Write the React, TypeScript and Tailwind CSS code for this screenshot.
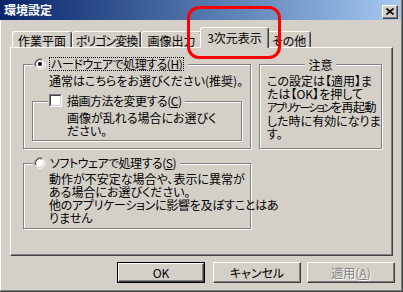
import React from 'react';

const FONT = "font-['Noto_Sans_CJK_JP','Liberation_Sans',sans-serif]";

const Radio: React.FC<{ checked?: boolean }> = ({ checked }) => (
  <svg width="12" height="12" viewBox="0 0 12 12" className="shrink-0">
    <path d="M1 8 A5.5 5.5 0 0 1 8 1" fill="none" stroke="#808080" strokeWidth="1" />
    <circle cx="6" cy="6" r="4.5" fill="#fff" />
    <path d="M2 8 A4.5 4.5 0 0 1 8 2" fill="none" stroke="#404040" strokeWidth="1" />
    <path d="M4 11 A5.5 5.5 0 0 0 11 4" fill="none" stroke="#fff" strokeWidth="1" />
    <path d="M4 10 A4.5 4.5 0 0 0 10 4" fill="none" stroke="#d4d0c8" strokeWidth="1" />
    {checked ? <circle cx="6" cy="6" r="2" fill="#000" /> : null}
  </svg>
);

const Checkbox: React.FC = () => (
  <div className="h-[13px] w-[13px] shrink-0 border-l border-t border-l-[#808080] border-t-[#808080] border-r border-b border-r-white border-b-white">
    <div className="h-full w-full border-l border-t border-l-[#404040] border-t-[#404040] border-r border-b border-r-[#d4d0c8] border-b-[#d4d0c8] bg-white" />
  </div>
);

const Group: React.FC<{ className?: string; legend: React.ReactNode; children?: React.ReactNode }> = ({
  className = '',
  legend,
  children,
}) => (
  <div
    className={`relative border border-[#808080] shadow-[inset_1px_1px_0_#ffffff,1px_1px_0_#ffffff] ${className}`}
  >
    {legend}
    {children}
  </div>
);

const Tab: React.FC<{ label: string; w: string; selected?: boolean; tight?: boolean }> = ({
  label,
  w,
  selected,
  tight,
}) => (
  <div
    className={`${w} flex items-center justify-center overflow-hidden whitespace-nowrap rounded-t-[3px] border-l border-t border-l-white border-t-white border-r border-r-[#404040] bg-[#d4d0c8] shadow-[inset_-1px_0_0_#808080] text-[12px] leading-[13px] ${
      tight ? 'tracking-[-1px]' : ''
    } ${selected ? 'relative z-10 -mx-[2px] h-[21px] self-start pb-[2px]' : 'mt-[4px] h-[16px] pt-[1px]'}`}
  >
    {label}
  </div>
);

const Button: React.FC<{ children: React.ReactNode; def?: boolean; disabled?: boolean; className?: string }> = ({
  children,
  def,
  disabled,
  className = '',
}) => (
  <div className={`h-[21px] w-[88px] ${def ? 'border border-black' : ''} ${className}`}>
    <div className="flex h-full w-full items-center justify-center border-l border-t border-l-white border-t-white border-r border-b border-r-[#404040] border-b-[#404040] shadow-[inset_-1px_-1px_0_#808080] text-[12px]">
      {disabled ? (
        <span className="text-[#808080] [text-shadow:1px_1px_0_#ffffff]">{children}</span>
      ) : (
        children
      )}
    </div>
  </div>
);

export default function App() {
  return (
    <div
      className={`${FONT} relative h-[292px] w-[403px] overflow-hidden bg-[#d4d0c8] text-black [font-feature-settings:'palt'] border-r border-b border-r-[#404040] border-b-[#404040]`}
    >
      <div className="flex h-full flex-col border-r border-b border-r-[#808080] border-b-[#808080] border-l border-l-white">
        {/* title bar */}
        <div className="-ml-[1px] flex h-[20px] items-center justify-between bg-linear-to-r from-[#0a246a] to-[#a6caf0] pl-[4px] pr-[3px]">
          <span className="text-[12px] font-bold leading-none text-white">環境設定</span>
          <div className="mt-[3px] flex h-[14px] w-[16px] items-center justify-center border-l border-t border-l-white border-t-white border-r border-b border-r-[#404040] border-b-[#404040] bg-[#d4d0c8] shadow-[inset_-1px_-1px_0_#808080]">
            <svg width="8" height="7" viewBox="0 0 8 7">
              <path d="M0.5 0.5 L7.5 6.5 M7.5 0.5 L0.5 6.5" stroke="#000" strokeWidth="1.6" />
            </svg>
          </div>
        </div>

        {/* tabs */}
        <div className="ml-[11px] mt-[7px] flex h-[20px] items-start">
          <Tab label="作業平面" w="w-[60px]" />
          <Tab label="ポリゴン変換" w="w-[69px]" tight />
          <Tab label="画像出力" w="w-[61px]" />
          <Tab label="3次元表示" w="w-[69px]" selected />
          <Tab label="その他" w="w-[44px]" />
        </div>

        {/* panel */}
        <div className="ml-[9px] flex h-[209px] w-[383px] border-l border-t border-l-white border-t-white border-r border-b border-r-[#404040] border-b-[#404040] shadow-[inset_-1px_-1px_0_#808080] pl-[12px] pt-[16px] text-[12px] leading-[13px]">
          <div className="flex w-[228px] flex-col">
            <Group
              className="h-[85px]"
              legend={
                <div className="absolute -top-[8px] left-[9px] flex items-center bg-[#d4d0c8] pr-[4px] pl-[1px]">
                  <Radio checked />
                  <span className="ml-[3px] whitespace-nowrap border border-dotted border-black px-[1px] leading-[12px] tracking-[-0.5px]">
                    ハードウェアで処理する(<span className="underline">H</span>)
                  </span>
                </div>
              }
            >
              <div className="whitespace-nowrap pl-[25px] pt-[9px]">通常はこちらをお選びください(推奨)。</div>
              <Group
                className="ml-[8px] mt-[14px] h-[40px] w-[210px]"
                legend={
                  <div className="absolute -top-[8px] left-[15px] flex items-center bg-[#d4d0c8] pl-[1px] pr-[4px]">
                    <Checkbox />
                    <span className="ml-[5px] whitespace-nowrap tracking-[-0.5px]">
                      描画方法を変更する(<span className="underline">C</span>)
                    </span>
                  </div>
                }
              >
                <div className="whitespace-nowrap pl-[34px] pt-[9px]">
                  画像が乱れる場合にお選びく
                  <br />
                  ださい。
                </div>
              </Group>
            </Group>

            <Group
              className="mt-[14px] h-[66px]"
              legend={
                <div className="absolute -top-[8px] left-[9px] flex items-center bg-[#d4d0c8] pl-[1px] pr-[4px]">
                  <Radio />
                  <span className="ml-[4px] whitespace-nowrap tracking-[-0.5px]">
                    ソフトウェアで処理する(<span className="underline">S</span>)
                  </span>
                </div>
              }
            >
              <div className="whitespace-nowrap pl-[25px] pt-[8px]">
                動作が不安定な場合や、表示に異常が
                <br />
                ある場合にお選びください。
                <br />
                <span className="tracking-[-0.3px]">他のアプリケーションに影響を及ぼすことはあ</span>
                <br />
                りません
              </div>
            </Group>
          </div>

          <Group
            className="ml-[8px] h-[85px] w-[123px]"
            legend={
              <div className="absolute -top-[7px] left-0 right-0 flex justify-center">
                <span className="bg-[#d4d0c8] px-[3px]">注意</span>
              </div>
            }
          >
            <div className="whitespace-nowrap pl-[7px] pt-[9px]">
              この設定は【適用】ま
              <br />
              たは【OK】を押して
              <br />
              <span className="text-[11px] tracking-[-1.8px]">アプリケーション</span>
              <span className="tracking-[-0.5px]">を再起動</span>
              <br />
              した時に有効になりま
              <br />
              す。
            </div>
          </Group>
        </div>

        {/* buttons */}
        <div className="mt-[6px] flex pl-[116px]">
          <Button def>OK</Button>
          <Button className="ml-[8px]">キャンセル</Button>
          <Button className="ml-[6px]" disabled>
            適用(<span className="underline">A</span>)
          </Button>
        </div>
      </div>

      {/* red annotation */}
      <div className="pointer-events-none absolute left-[187px] top-[6px] z-20 h-[53px] w-[94px] rounded-[12px] border-[3px] border-[#ff0000]" />
    </div>
  );
}
